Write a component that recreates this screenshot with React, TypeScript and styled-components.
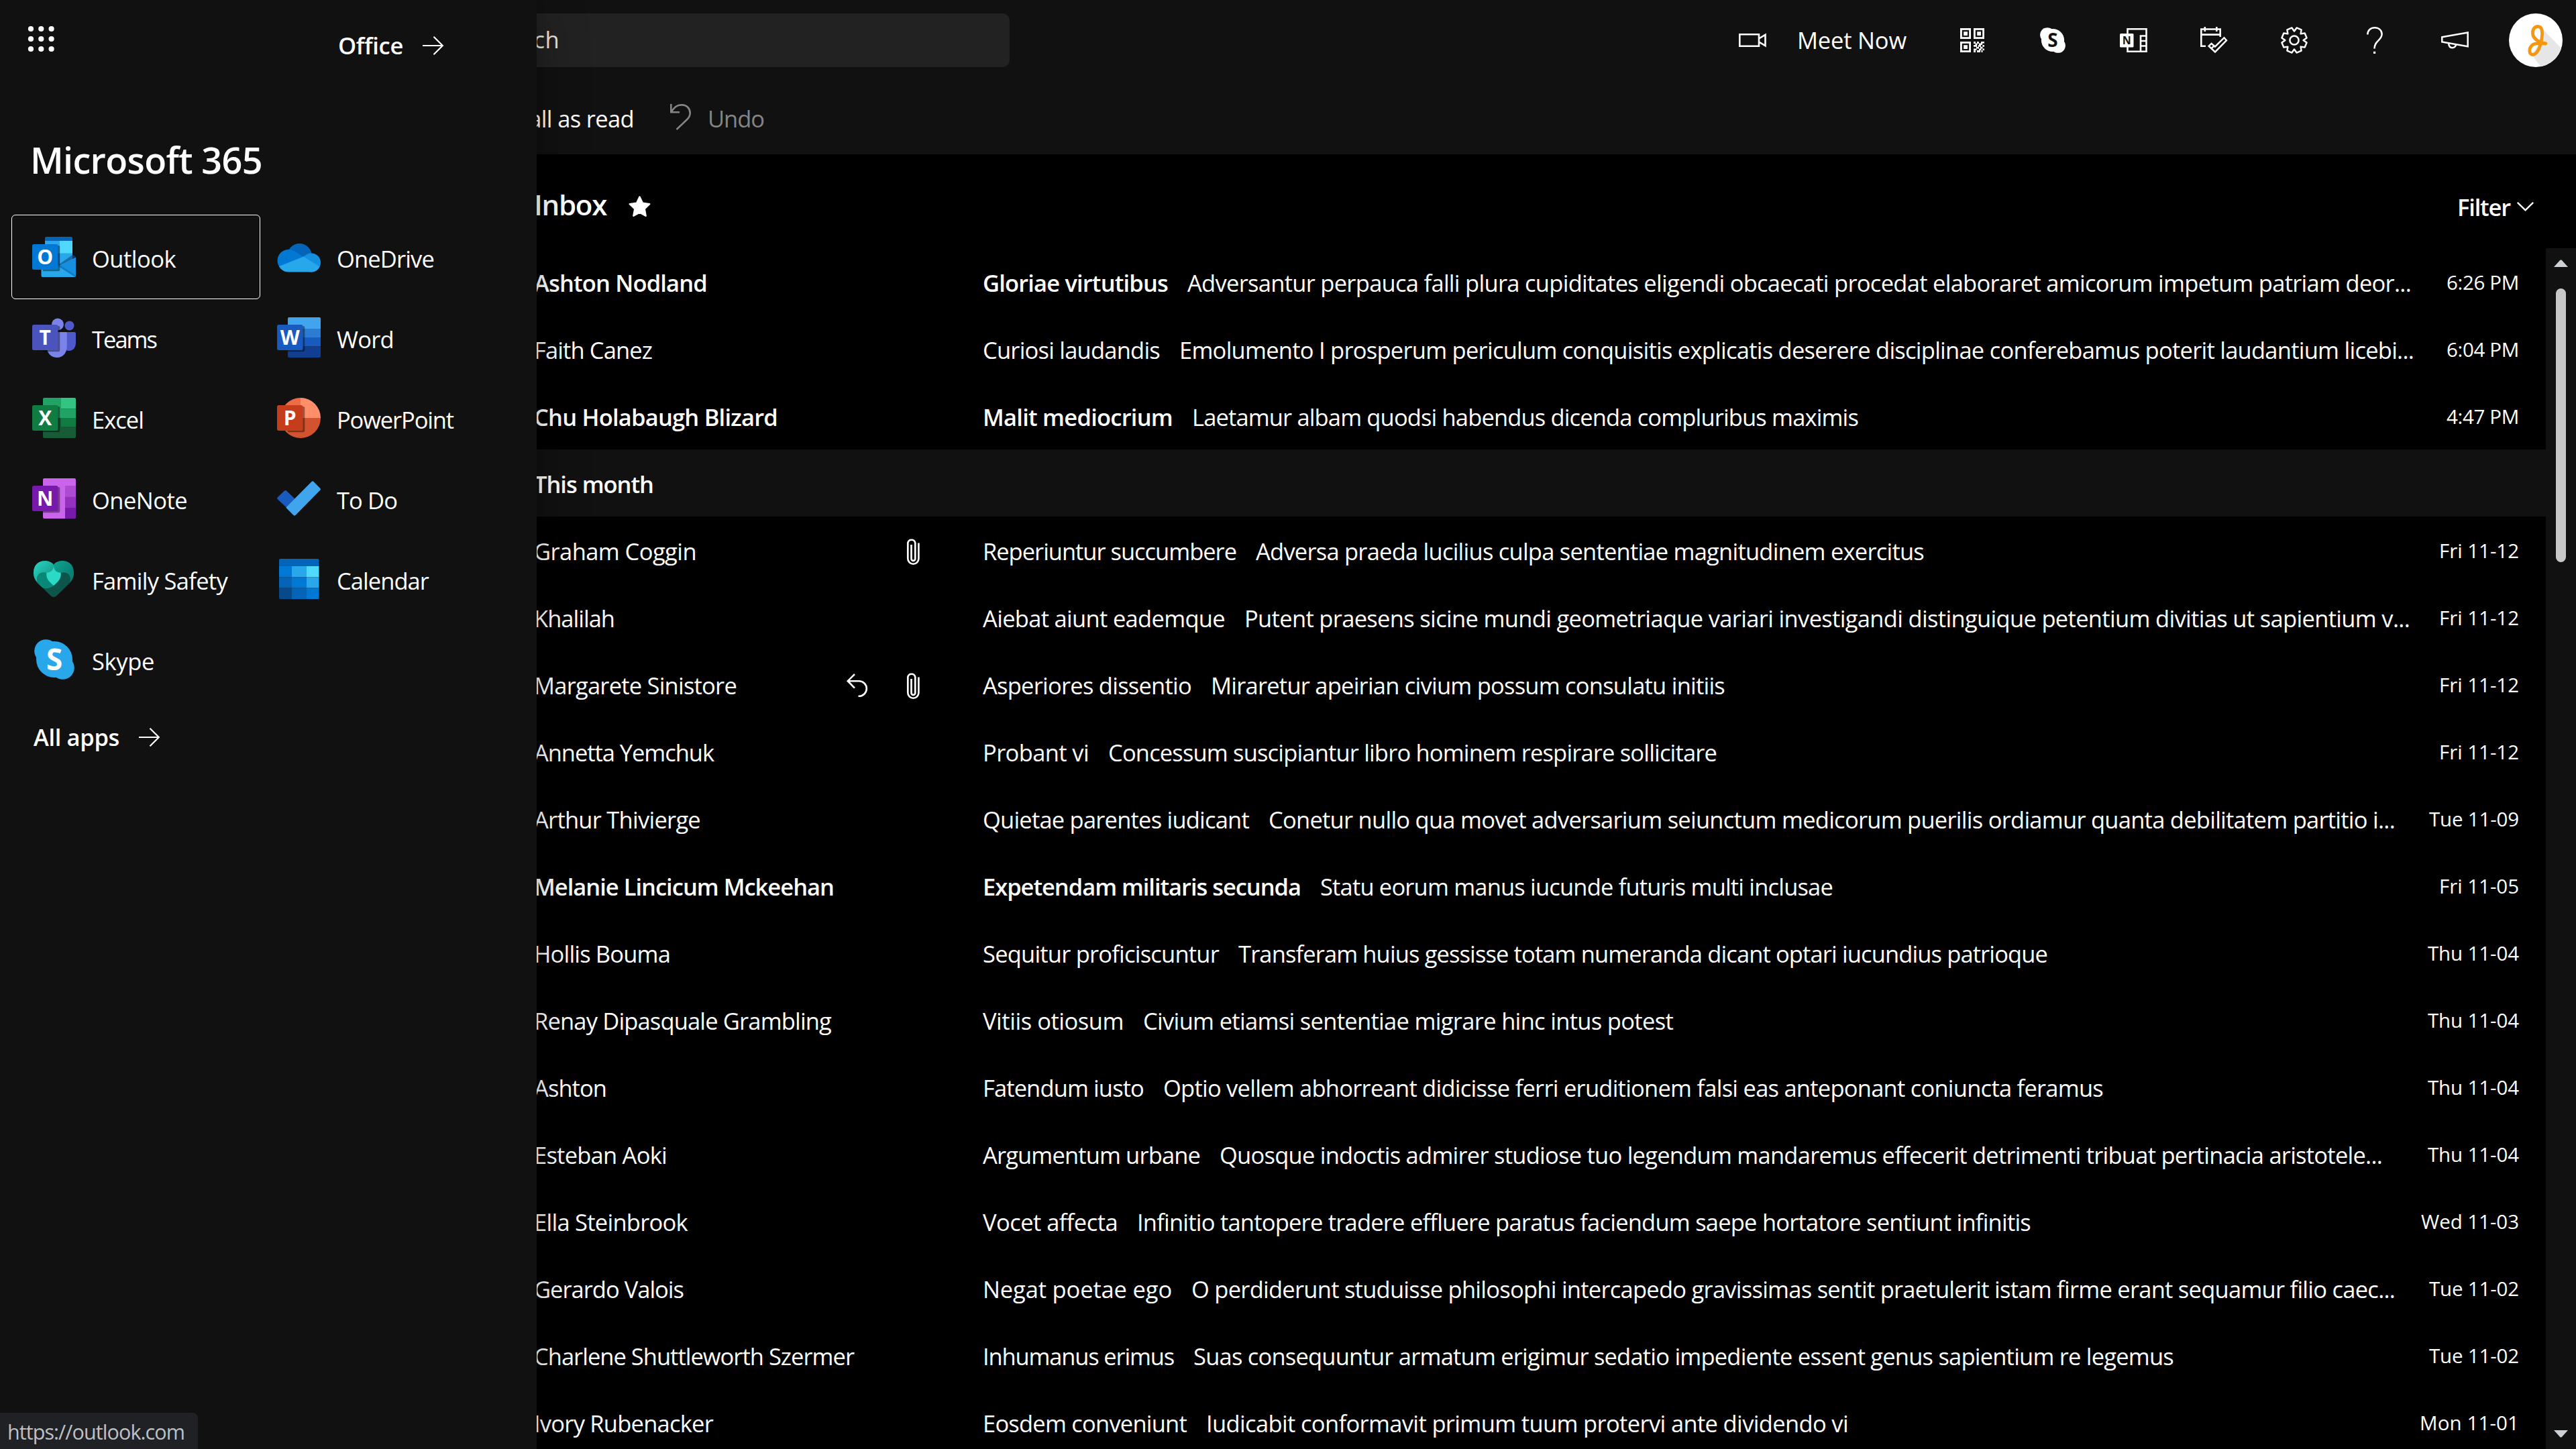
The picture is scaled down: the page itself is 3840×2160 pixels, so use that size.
import React from 'react';
import styled, { createGlobalStyle } from 'styled-components';

const FONT = '"Open Sans", "Noto Sans", "Liberation Sans", sans-serif';

const GlobalStyle = createGlobalStyle`
  html, body { margin: 0; padding: 0; background: #000; overflow: hidden; }
  * { box-sizing: border-box; }
  body { font-family: ${FONT}; color: #fff; }
  svg { display: block; flex: none; overflow: visible; }
`;

/* ---------- text with an even track to a known column width ---------- */

const ctx = document.createElement('canvas').getContext('2d')!;

function tracking(text: string, size: number, weight: number, width?: number) {
  if (!width) return 0;
  ctx.font = `${weight} ${size}px ${FONT}`;
  return (width - ctx.measureText(text).width) / text.length;
}

const Label = styled.span<{ $size: number; $weight: number; $track: number; $color?: string }>`
  font-size: ${p => p.$size}px;
  font-weight: ${p => p.$weight};
  letter-spacing: ${p => p.$track.toFixed(3)}px;
  color: ${p => p.$color || 'inherit'};
  white-space: pre;
  line-height: 1.362;
`;

type TextProps = { children: string; size?: number; weight?: number; width?: number; color?: string };
const Text = ({ children, size = 34.5, weight = 400, width, color }: TextProps) => (
  <Label $size={size} $weight={weight} $color={color} $track={tracking(children, size, weight, width)}>
    {children}
  </Label>
);

/* ---------- page ---------- */

const Page = styled.div`
  position: relative;
  width: 3840px;
  height: 2160px;
  overflow: hidden;
  background: #000;
  display: flex;
  flex-direction: column;
`;

const TopBar = styled.header`
  flex: none;
  height: 120px;
  background: #111;
  display: flex;
  align-items: center;
  justify-content: space-between;
  padding: 0 0 0 600px;
`;

const SearchBox = styled.div`
  width: 905px;
  height: 80px;
  border-radius: 10px;
  background: #222;
  display: flex;
  align-items: center;
  padding: 0 0 3px 122px;
`;

const Actions = styled.div`
  display: flex;
  align-items: center;
`;

const MeetNow = styled.div`
  display: flex;
  align-items: center;
  gap: 45px;
  margin-right: 38px;
  & > span { padding-bottom: 2px; }
`;

const ActionButton = styled.div`
  width: 120px;
  height: 120px;
  display: flex;
  align-items: center;
  justify-content: center;
`;

const Toolbar = styled.div`
  flex: none;
  height: 110px;
  background: #111;
  display: flex;
  align-items: center;
  padding: 2px 0 0 700px;
`;

const UndoButton = styled.div`
  display: flex;
  align-items: center;
  gap: 24px;
  margin-left: 54px;
  svg { margin-bottom: 2px; }
`;

const ListHeader = styled.div`
  flex: none;
  height: 140px;
  display: flex;
  align-items: center;
  justify-content: space-between;
  padding: 10px 63px 0 796px;
`;

const Folder = styled.div`
  display: flex;
  align-items: center;
  gap: 33px;
  svg { margin-top: 7px; }
`;

const Filter = styled.div`
  display: flex;
  align-items: center;
  gap: 10px;
  padding-top: 6px;
`;

const ListArea = styled.div`
  flex: 1;
  min-height: 0;
  display: flex;
`;

const Messages = styled.div`
  flex: 1;
  overflow: hidden;
`;

const Row = styled.div`
  height: 100px;
  display: grid;
  grid-template-columns: 466px 90px 112px 1fr auto;
  align-items: center;
  padding: 3px 40px 0 796px;
`;

const GroupRow = styled.div`
  height: 100px;
  background: #111;
  display: flex;
  align-items: center;
  padding: 3px 0 0 796px;
`;

const Cell = styled.div<{ $lift?: number }>`
  display: flex;
  align-items: center;
  padding-bottom: ${p => p.$lift || 0}px;
`;

const Content = styled.div`
  display: flex;
  align-items: center;
  gap: 29px;
  padding-left: 1px;
`;

const ScrollTrack = styled.div`
  width: 45px;
  background: #111;
  display: flex;
  flex-direction: column;
  align-items: center;
  padding: 17px 0 17px;
`;

const Thumb = styled.div`
  width: 15px;
  height: 408px;
  margin-top: 32px;
  margin-bottom: auto;
  border-radius: 8px;
  background: #c8c8c8;
`;

/* ---------- launcher panel ---------- */

const Panel = styled.aside`
  position: absolute;
  left: 0;
  top: 0;
  width: 800px;
  height: 2160px;
  background: #111;
  box-shadow: 0 16px 72px rgba(0, 0, 0, 0.3), 0 3px 14px rgba(0, 0, 0, 0.12);
  display: flex;
  flex-direction: column;
`;

const PanelTop = styled.div`
  height: 120px;
  display: flex;
  justify-content: space-between;
  padding: 39px 139px 0 42px;
`;

const Link = styled.div<{ $gap: number }>`
  display: flex;
  align-items: center;
  gap: ${p => p.$gap}px;
`;

const OfficeLink = styled(Link)`
  height: 56px;
  svg { margin-top: 1px; }
`;

const PanelTitle = styled.div`
  height: 203px;
  padding: 82px 0 0 45px;
`;

const AppGrid = styled.div`
  display: grid;
  grid-template-columns: 365px 365px;
  grid-auto-rows: 120px;
  padding-left: 20px;
`;

const AppItem = styled.div<{ $focused?: boolean }>`
  display: flex;
  align-items: center;
  gap: 24px;
  padding-left: 28px;
  border-radius: 3px;
  outline: ${p => (p.$focused ? '1px solid #fff' : 'none')};
  outline-offset: 2px;
  & > span { padding-top: 5px; }
`;

const AllApps = styled(Link)`
  height: 110px;
  padding-left: 50px;
  svg { margin-top: 2px; }
`;

const StatusBubble = styled.div`
  position: absolute;
  left: 0;
  bottom: 0;
  width: 295px;
  height: 54px;
  background: #202124;
  border-top-right-radius: 8px;
  display: flex;
  align-items: center;
  padding: 3px 0 0 11px;
`;

/* ---------- glyphs ---------- */

const Waffle = () => (
  <svg width="39" height="38" viewBox="0 0 39 38" fill="#fff">
    {[4, 19, 34].map(y => [4, 19.3, 34.6].map(x => <circle key={`${x}-${y}`} cx={x} cy={y} r="4.1" />))}
  </svg>
);

const Arrow = () => (
  <svg width="31" height="28" viewBox="0 0 31 28" fill="none" stroke="#fff" strokeWidth="2.2">
    <path d="M0 14H30M16.5 0.8L29.8 14L16.5 27.2" />
  </svg>
);

const Camera = () => (
  <svg width="42" height="20" viewBox="0 0 42 20" fill="none" stroke="#fff" strokeWidth="2.6">
    <path d="M1.3 1.3H30V18.7H1.3ZM30 7.5L39.5 1.8V18.2L30 12.5" />
  </svg>
);

const QrCode = () => (
  <svg width="36" height="36" viewBox="0 0 36 36">
    {[[0, 0], [20, 0], [0, 20]].map(([x, y]) => (
      <g key={`${x}-${y}`}>
        <rect x={x + 1.4} y={y + 1.4} width="13.2" height="13.2" fill="none" stroke="#fff" strokeWidth="2.8" />
        <rect x={x + 5.2} y={y + 5.2} width="5.8" height="5.8" fill="#fff" />
      </g>
    ))}
    <path
      fill="#fff"
      d="M20 20h3v3h-3zM25 20h3v3h-3zM31 20h2.5v3H31zM22.500 22.500h3v3h-3zM28 22.500h5v2.500h-5zM33 20h3v2.500h-3zM20 25h5v2.700h-5zM27 25h4v2.700h-4zM33.400 25h2.600v2.700h-2.600zM24 27.700h4v2.700h-4zM30 27.700h3.500v2.700H30zM20 30.400h4.500v2.700H20zM28 30.400h3.500v2.700H28zM33.400 30.400h2.600v2.700h-2.600zM20 33.300h3v2.700h-3zM25 33.100h5v2.900h-5zM31.500 33.100h2v2.900h-2z"
    />
  </svg>
);

const SkypeGlyph = ({ size, fill, ink }: { size: number; fill: string; ink: string }) => (
  <svg width={size} height={size} viewBox="0 0 60 60">
    <g fill={fill}>
      <circle cx="30" cy="30" r="27" />
      <circle cx="17.500" cy="17.500" r="17.300" />
      <circle cx="42.500" cy="42.500" r="17.300" />
    </g>
    <text x="30" y="46" textAnchor="middle" fontFamily={FONT} fontWeight="700" fontSize="44" fill={ink}>S</text>
  </svg>
);

const OneNoteGlyph = () => (
  <svg width="41" height="36" viewBox="0 0 41 36">
    <path fill="none" stroke="#fff" strokeWidth="2.600" d="M11.500 8V1.300H39.500V34.700H11.500V28M31 11.500H40M31 10.200V34M31 19H40M31 26.500H40" />
    <rect y="8" width="20.500" height="20.500" rx="1.500" fill="#fff" />
    <text x="10.200" y="23.800" textAnchor="middle" fontFamily={FONT} fontWeight="700" fontSize="16" fill="#111">N</text>
  </svg>
);

const MyDay = () => (
  <svg width="40" height="40" viewBox="0 0 40 40" fill="none" stroke="#fff" strokeWidth="2.600">
    <path d="M8 28.800H1.300V3.500H29.700V15M1.300 11.600H29.700M6.800 0V7M24.300 0V7" />
    <path d="M35.500 16.200L39 20.200L22 37.500L12.600 28.700L16.600 24.800L21.800 29.700ZM16.500 32.200L21.500 27.500" strokeWidth="2.400" />
  </svg>
);

const gearPoints = Array.from({ length: 8 }, (_, i) => {
  const at = (r: number, deg: number) => {
    const a = ((i * 45 + deg) * Math.PI) / 180;
    return `${(20 + r * Math.cos(a)).toFixed(2)},${(20 + r * Math.sin(a)).toFixed(2)}`;
  };
  return [at(13.6, 0), at(18.9, 11), at(18.9, 34)].join(' ');
}).join(' ');

const Gear = () => (
  <svg width="40" height="40" viewBox="0 0 40 40" fill="none" stroke="#fff" strokeWidth="2.500" strokeLinejoin="round">
    <polygon points={gearPoints} />
    <circle cx="20" cy="20" r="6.600" />
  </svg>
);

const Help = () => (
  <svg width="24" height="40" viewBox="0 0 24 40">
    <path fill="none" stroke="#fff" strokeWidth="2.500" d="M1.300 11.500C1.300 5 6 1.300 12 1.300S22.600 5 22.600 11C22.600 20 11.500 20.500 11.500 32.500" />
    <rect x="10" y="36.800" width="3.200" height="3.200" fill="#fff" />
  </svg>
);

const Megaphone = () => (
  <svg width="42" height="26" viewBox="0 0 42 26" fill="none" stroke="#fff" strokeWidth="2.500">
    <path d="M1.300 8.200L39.700 1.500V22.300L1.300 15.500ZM11 17.500C11.500 22 13.500 24.200 16.500 24.200S21.500 22.500 22.300 19.300" />
  </svg>
);

const AvatarFace = styled.div`
  width: 80px;
  height: 80px;
  border-radius: 50%;
  overflow: hidden;
  background: #fff;
`;

const Avatar = () => (
  <AvatarFace>
    <svg width="80" height="80" viewBox="0 0 80 80">
      <path d="M49 22L82 56V82H50L34 62L46 44Z" fill="#e6e6e6" />
      <path
        d="M55 45C46 44 36 38 35.500 30C35 23 39 19.500 43 19.500C49.500 19.500 50.500 27 49 37C47 50 42 61.500 35.500 61.500C29.500 61.500 29.500 52 34.500 47.500C39 43.500 47 44 54 45"
        fill="none"
        stroke="#f7970f"
        strokeWidth="4.800"
        strokeLinecap="round"
      />
    </svg>
  </AvatarFace>
);

const UndoIcon = () => (
  <svg width="32" height="39" viewBox="0 0 32 39" fill="none" stroke="#858585" strokeWidth="2.600">
    <path d="M1.300 0V12.300H14M1.600 12C6 5 10 1.400 17 1.400C25 1.400 29.700 7 29.700 13.500C29.700 17.500 28 20.500 25 23.300L9.500 38" />
  </svg>
);

const Star = () => (
  <svg width="33" height="32" viewBox="0 0 33 32">
    <path
      fill="#fff"
      stroke="#fff"
      strokeWidth="2.500"
      strokeLinejoin="round"
      d="M16.500 1.600L20.900 10.800L31.200 12.200L23.700 19.400L25.600 29.700L16.500 24.700L7.400 29.700L9.300 19.400L1.800 12.200L12.100 10.800Z"
    />
  </svg>
);

const Chevron = () => (
  <svg width="25" height="14" viewBox="0 0 25 14" fill="none" stroke="#fff" strokeWidth="2.400">
    <path d="M0.800 0.800L12.500 12.300L24.200 0.800" />
  </svg>
);

const Reply = () => (
  <svg width="31" height="35" viewBox="0 0 31 35" fill="none" stroke="#fff" strokeWidth="2.600">
    <path d="M12 1L1.800 11.200L12 21.600M1.800 11.200H18.500A11.300 11.300 0 0 1 18.500 33.800H17.500" />
  </svg>
);

const Clip = () => (
  <svg width="19" height="40" viewBox="0 0 19 40" fill="none" stroke="#fff" strokeWidth="2.700">
    <path d="M17.400 7.500V30.700A8 8 0 0 1 1.300 30.700V7.300A5.600 5.600 0 0 1 12.300 7.300V31A2.900 2.900 0 0 1 6.500 31V10" />
  </svg>
);

const ScrollArrow = ({ down }: { down?: boolean }) => (
  <svg width="21" height="11" viewBox="0 0 21 11" fill="#cdd1d6">
    <path d={down ? 'M0 0H21L11.500 10.500H9.500Z' : 'M0 11H21L11.500 0.500H9.500Z'} />
  </svg>
);

/* ---------- app logos ---------- */

const Plate = ({ fill, letter }: { fill: string; letter: string }) => (
  <g>
    <path d="M16 13H39.500a1.800 1.800 0 0 1 1.800 1.800V49a2.300 2.300 0 0 1-2.300 2.300H16Z" fill="#000" fillOpacity="0.400" />
    <rect y="11" width="38.500" height="38" rx="2.500" fill={fill} />
    <text x="19.200" y="40.500" textAnchor="middle" fontFamily={FONT} fontWeight="700" fontSize="30" fill="#fff">{letter}</text>
  </g>
);

const logos: Record<string, React.ReactNode> = {
  Outlook: (
    <>
      <path d="M60 26L65 30V34H55Z" fill="#0a2767" />
      <path d="M19 2a2 2 0 0 1 2-2H58a2 2 0 0 1 2 2V6H19Z" fill="#0364b8" />
      <path d="M19 6H60V44H19Z" fill="#28a8ea" />
      <path d="M41 6H60V24.500H41Z" fill="#50d9ff" />
      <path d="M19 24.500H41V44H19Z" fill="#0078d4" />
      <path d="M60 27L65 30L60 33L40 43.500L40 41Z" fill="#14447d" fillOpacity="0.600" />
      <path d="M13.500 42H38L65 57V58a2 2 0 0 1-2 2H15.500a2 2 0 0 1-2-2Z" fill="#28a8ea" />
      <path d="M65 30.500V58L63.500 59.500L39 44Z" fill="#1490df" />
      <path d="M39 44L63.500 59.500L65 57.500L43 43Z" fill="#117cc4" />
      <Plate fill="#0078d4" letter="O" />
    </>
  ),
  OneDrive: (
    <>
      <circle cx="33.500" cy="28.500" r="18.500" fill="#0364b8" />
      <circle cx="17" cy="35.500" r="16.500" fill="#0078d4" />
      <path d="M16 19C24 19 30 24 40 30L30 40H10Z" fill="#0078d4" />
      <circle cx="51" cy="38.500" r="14" fill="#1490df" />
      <path d="M38 30L50 24.500L60 40H40Z" fill="#1490df" />
      <path d="M3 44L39.500 29.500L63.500 44.500C61 49.500 56.500 52.500 51 52.500H17C11 52.500 6 49 3 44Z" fill="#28a8ea" />
    </>
  ),
  Teams: (
    <>
      <circle cx="38" cy="10.500" r="9" fill="#7b83eb" />
      <circle cx="55.500" cy="12.500" r="7" fill="#5059c9" />
      <path d="M48 22H63a2 2 0 0 1 2 2V38C65 45 61 50 55 50C52 50 50 49 48 47Z" fill="#5059c9" />
      <path d="M22 22H50a1.800 1.800 0 0 1 1.800 1.800V43C51.800 53 46 60 37 60C29 60 22 54 22 45Z" fill="#7b83eb" />
      <Plate fill="#4b53bc" letter="T" />
    </>
  ),
  Word: (
    <>
      <path d="M16 2a2 2 0 0 1 2-2H63a2 2 0 0 1 2 2V17H16Z" fill="#41a5ee" />
      <path d="M16 17H65V30H16Z" fill="#2b7cd3" />
      <path d="M16 30H65V43.500H16Z" fill="#185abd" />
      <path d="M16 43.500H65V58a2 2 0 0 1-2 2H18a2 2 0 0 1-2-2Z" fill="#103f91" />
      <Plate fill="#185abd" letter="W" />
    </>
  ),
  Excel: (
    <>
      <path d="M16 2a2 2 0 0 1 2-2H43V30H16Z" fill="#21a366" />
      <path d="M43 0H63a2 2 0 0 1 2 2V16.500H43Z" fill="#33c481" />
      <path d="M43 16.500H65V30H43Z" fill="#21a366" />
      <path d="M16 30H43V43.500H65V58a2 2 0 0 1-2 2H18a2 2 0 0 1-2-2Z" fill="#185c37" />
      <path d="M43 30H65V43.500H43Z" fill="#107c41" />
      <Plate fill="#107c41" letter="X" />
    </>
  ),
  PowerPoint: (
    <>
      <path d="M35 0A30 30 0 0 0 5 30H35Z" fill="#ed6c47" />
      <path d="M35 0A30 30 0 0 1 65 30H35Z" fill="#ff8f6b" />
      <path d="M5 30A30 30 0 0 0 65 30Z" fill="#d35230" />
      <Plate fill="#c43e1c" letter="P" />
    </>
  ),
  OneNote: (
    <>
      <rect x="16" width="49" height="60" rx="2" fill="#ca64ea" />
      <path d="M49 11H65V27.500H49Z" fill="#ae4bd5" />
      <path d="M49 27.500H65V43.500H49Z" fill="#9332bf" />
      <path d="M49 43.500H65V58a2 2 0 0 1-2 2H49Z" fill="#7719aa" />
      <Plate fill="#7719aa" letter="N" />
    </>
  ),
  'To Do': (
    <>
      <path d="M0.600 28.500L11 18.500Q12.500 17.300 14 18.500L26.500 30.500L14 43.500L0.600 31Q-0.500 29.700 0.600 28.500Z" fill="#185abd" />
      <path d="M51.500 5Q53 3.700 54.500 5L64.400 15Q65.500 16.300 64.400 17.600L27.500 55Q26 56.400 24.500 55L14 44.500Q13.300 43.500 14 42.700Z" fill="#41a5ee" />
    </>
  ),
  'Family Safety': (
    <>
      <defs>
        <linearGradient id="lobeL" x1="0" y1="0" x2="1" y2="1">
          <stop offset="0" stopColor="#2ad8c4" />
          <stop offset="1" stopColor="#118c7e" />
        </linearGradient>
        <linearGradient id="lobeR" x1="0" y1="0" x2="1" y2="1">
          <stop offset="0" stopColor="#0ea393" />
          <stop offset="1" stopColor="#077568" />
        </linearGradient>
      </defs>
      <path d="M32 9C27 0 2 -1 2 21C2 29 6 34 10 38L27 54.500Q32 59.500 37 54.500L54 38C58 34 62 29 62 21C62 -1 37 0 32 9Z" fill="#0d544a" />
      <path d="M8 36C4 24 13 18 23 21L32 40C26 45 17 46 12 40Z" fill="#0a8877" />
      <path d="M32 9C37 0 62 -1 62 21C62 28 59 32 56 36C60 24 51 18 42 21C35 21 31 15 32 9Z" fill="url(#lobeR)" />
      <path d="M32 9C27 0 2 -1 2 21C2 28 5 32 8 36C4 24 13 18 22 21C29 21 33 15 32 9Z" fill="url(#lobeL)" />
      <path d="M32 11C31 18 27 20.500 21.500 20.500C20 29 25 34 32 40C39 34 44 29 42.500 20.500C37 20.500 33 18 32 11Z" fill="#2bdac6" />
    </>
  ),
  Calendar: (
    <>
      <path d="M3 2a2 2 0 0 1 2-2H60.500a2 2 0 0 1 2 2V11H3Z" fill="#0364b8" />
      <path d="M3 11H22V27.500H3Z" fill="#0078d4" />
      <path d="M22 11H44V27.500H22Z" fill="#28a8ea" />
      <path d="M44 11H62.500V27.500H44Z" fill="#50d9ff" />
      <path d="M3 27.500H22V43.500H3Z" fill="#0364b8" />
      <path d="M22 27.500H44V43.500H22Z" fill="#0078d4" />
      <path d="M44 27.500H62.500V43.500H44Z" fill="#28a8ea" />
      <path d="M3 43.500H22V60H5a2 2 0 0 1-2-2Z" fill="#064a8c" />
      <path d="M22 43.500H44V60H22Z" fill="#0364b8" />
      <path d="M44 43.500H62.500V58a2 2 0 0 1-2 2H44Z" fill="#0078d4" />
    </>
  ),
};

const Logo = ({ name }: { name: string }) =>
  name === 'Skype' ? (
    <svg width="65" height="60" viewBox="-3 0 65 60">
      <SkypeGlyph size={60} fill="#28a8ea" ink="#fff" />
    </svg>
  ) : (
    <svg width="65" height="60" viewBox="0 0 65 60">{logos[name]}</svg>
  );

/* ---------- data ---------- */

const apps: [string, number][] = [
  ['Outlook', 125], ['OneDrive', 145],
  ['Teams', 96], ['Word', 85],
  ['Excel', 77], ['PowerPoint', 174],
  ['OneNote', 142], ['To Do', 90],
  ['Family Safety', 202], ['Calendar', 137],
  ['Skype', 93],
];

type Mail = {
  from: [string, number];
  subject: [string, number];
  preview: [string, number];
  time: [string, number];
  unread?: boolean;
  replied?: boolean;
  attachment?: boolean;
};

const recent: Mail[] = [
  { from: ['Ashton Nodland', 258], subject: ['Gloriae virtutibus', 276], preview: ['Adversantur perpauca falli plura cupiditates eligendi obcaecati procedat elaboraret amicorum impetum patriam deor...', 1824], time: ['6:26 PM', 108], unread: true },
  { from: ['Faith Canez', 176], subject: ['Curiosi laudandis', 264], preview: ['Emolumento I prosperum periculum conquisitis explicatis deserere disciplinae conferebamus poterit laudantium licebi...', 1840], time: ['6:04 PM', 108] },
  { from: ['Chu Holabaugh Blizard', 363], subject: ['Malit mediocrium', 283], preview: ['Laetamur albam quodsi habendus dicenda compluribus maximis', 993], time: ['4:47 PM', 108], unread: true },
];

const month: Mail[] = [
  { from: ['Graham Coggin', 242], subject: ['Reperiuntur succumbere', 378], preview: ['Adversa praeda lucilius culpa sententiae magnitudinem exercitus', 996], time: ['Fri 11-12', 119], attachment: true },
  { from: ['Khalilah', 120], subject: ['Aiebat aiunt eademque', 361], preview: ['Putent praesens sicine mundi geometriaque variari investigandi distinguique petentium divitias ut sapientium v...', 1737], time: ['Fri 11-12', 119] },
  { from: ['Margarete Sinistore', 302], subject: ['Asperiores dissentio', 311], preview: ['Miraretur apeirian civium possum consulatu initiis', 766], time: ['Fri 11-12', 119], replied: true, attachment: true },
  { from: ['Annetta Yemchuk', 268], subject: ['Probant vi', 158], preview: ['Concessum suscipiantur libro hominem respirare sollicitare', 907], time: ['Fri 11-12', 119] },
  { from: ['Arthur Thivierge', 248], subject: ['Quietae parentes iudicant', 397], preview: ['Conetur nullo qua movet adversarium seiunctum medicorum puerilis ordiamur quanta debilitatem partitio i...', 1679], time: ['Tue 11-09', 134] },
  { from: ['Melanie Lincicum Mckeehan', 447], subject: ['Expetendam militaris secunda', 474], preview: ['Statu eorum manus iucunde futuris multi inclusae', 764], time: ['Fri 11-05', 119], unread: true },
  { from: ['Hollis Bouma', 203], subject: ['Sequitur proficiscuntur', 352], preview: ['Transferam huius gessisse totam numeranda dicant optari iucundius patrioque', 1206], time: ['Thu 11-04', 136] },
  { from: ['Renay Dipasquale Grambling', 443], subject: ['Vitiis otiosum', 210], preview: ['Civium etiamsi sententiae migrare hinc intus potest', 790], time: ['Thu 11-04', 136] },
  { from: ['Ashton', 108], subject: ['Fatendum iusto', 240], preview: ['Optio vellem abhorreant didicisse ferri eruditionem falsi eas anteponant coniuncta feramus', 1401], time: ['Thu 11-04', 136] },
  { from: ['Esteban Aoki', 198], subject: ['Argumentum urbane', 324], preview: ['Quosque indoctis admirer studiose tuo legendum mandaremus effecerit detrimenti tribuat pertinacia aristotele...', 1733], time: ['Thu 11-04', 136] },
  { from: ['Ella Steinbrook', 229], subject: ['Vocet affecta', 201], preview: ['Infinitio tantopere tradere effluere paratus faciendum saepe hortatore sentiunt infinitis', 1332], time: ['Wed 11-03', 146] },
  { from: ['Gerardo Valois', 223], subject: ['Negat poetae ego', 282], preview: ['O perdiderunt studuisse philosophi intercapedo gravissimas sentit praetulerit istam firme erant sequamur filio caec...', 1794], time: ['Tue 11-02', 134] },
  { from: ['Charlene Shuttleworth Szermer', 477], subject: ['Inhumanus erimus', 285], preview: ['Suas consequuntur armatum erigimur sedatio impediente essent genus sapientium re legemus', 1461], time: ['Tue 11-02', 134] },
  { from: ['Ivory Rubenacker', 267], subject: ['Eosdem conveniunt', 304], preview: ['Iudicabit conformavit primum tuum protervi ante dividendo vi', 957], time: ['Mon 11-01', 148] },
];

const MailRow = ({ mail }: { mail: Mail }) => {
  const weight = mail.unread ? 600 : 400;
  return (
    <Row>
      <Text weight={weight} width={mail.from[1]}>{mail.from[0]}</Text>
      <Cell $lift={-2}>{mail.replied && <Reply />}</Cell>
      <Cell>{mail.attachment && <Clip />}</Cell>
      <Content>
        <Text weight={weight} width={mail.subject[1]}>{mail.subject[0]}</Text>
        <Text width={mail.preview[1]}>{mail.preview[0]}</Text>
      </Content>
      <Text size={29.5} width={mail.time[1]}>{mail.time[0]}</Text>
    </Row>
  );
};

export default function App() {
  return (
    <>
      <GlobalStyle />
      <Page>
        <TopBar>
          <SearchBox>
            <Text width={112} color="#e8e8e8">Search</Text>
          </SearchBox>
          <Actions>
            <MeetNow>
              <Camera />
              <Text width={163}>Meet Now</Text>
            </MeetNow>
            <ActionButton><QrCode /></ActionButton>
            <ActionButton><SkypeGlyph size={38} fill="#fff" ink="#111" /></ActionButton>
            <ActionButton><OneNoteGlyph /></ActionButton>
            <ActionButton><MyDay /></ActionButton>
            <ActionButton><Gear /></ActionButton>
            <ActionButton><Help /></ActionButton>
            <ActionButton><Megaphone /></ActionButton>
            <ActionButton><Avatar /></ActionButton>
          </Actions>
        </TopBar>
        <Toolbar>
          <Text width={245}>Mark all as read</Text>
          <UndoButton>
            <UndoIcon />
            <Text width={84} color="#858585">Undo</Text>
          </UndoButton>
        </Toolbar>
        <ListHeader>
          <Folder>
            <Text size={42} weight={600} width={108}>Inbox</Text>
            <Star />
          </Folder>
          <Filter>
            <Text weight={600} width={79}>Filter</Text>
            <Chevron />
          </Filter>
        </ListHeader>
        <ListArea>
          <Messages>
            {recent.map(m => <MailRow key={m.from[0]} mail={m} />)}
            <GroupRow>
              <Text weight={600} width={178}>This month</Text>
            </GroupRow>
            {month.map(m => <MailRow key={m.from[0]} mail={m} />)}
          </Messages>
          <ScrollTrack>
            <ScrollArrow />
            <Thumb />
            <ScrollArrow down />
          </ScrollTrack>
        </ListArea>
        <Panel>
          <PanelTop>
            <Waffle />
            <OfficeLink $gap={29}>
              <Text weight={600} width={97}>Office</Text>
              <Arrow />
            </OfficeLink>
          </PanelTop>
          <PanelTitle>
            <Text size={54} weight={600} width={346}>Microsoft 365</Text>
          </PanelTitle>
          <AppGrid>
            {apps.map(([name, width], i) => (
              <AppItem key={name} $focused={i === 0}>
                <Logo name={name} />
                <Text width={width}>{name}</Text>
              </AppItem>
            ))}
          </AppGrid>
          <AllApps $gap={29}>
            <Text weight={600} width={128}>All apps</Text>
            <Arrow />
          </AllApps>
        </Panel>
        <StatusBubble>
          <Text size={30.5} width={264} color="#bdc1c6">https://outlook.com</Text>
        </StatusBubble>
      </Page>
    </>
  );
}
